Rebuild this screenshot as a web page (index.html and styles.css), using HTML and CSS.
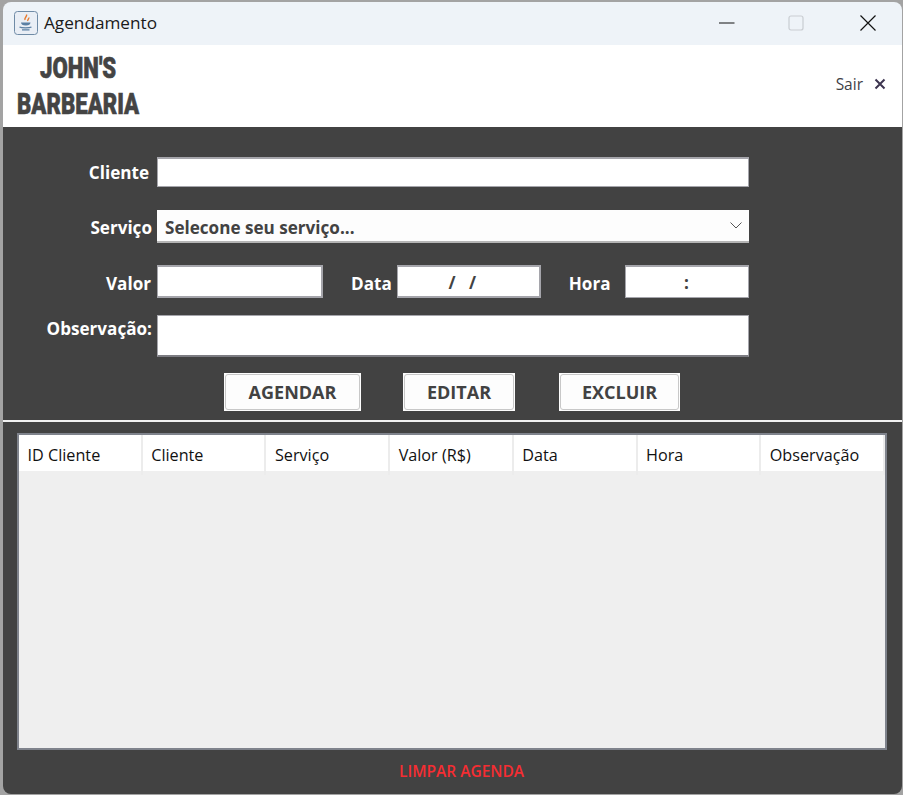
FILE: index.html
```html
<!DOCTYPE html>
<html lang="pt">
<head>
<meta charset="utf-8">
<title>Agendamento</title>
<link rel="stylesheet" href="styles.css">
</head>
<body>
<div class="window">
  <div class="titlebar">
    <span class="app-icon">
      <svg width="24" height="24" viewBox="0 0 24 24">
        <rect x="0.5" y="0.5" width="23" height="23" rx="3" fill="#e9eef5" stroke="#6f8ba6"/>
        <path d="M12.500 3.500c1 2-2.500 3-1.500 5.500M14.800 6.500c.5 1.300-1.500 2-1 3.500" fill="none" stroke="#e8792b" stroke-width="1.400"/>
        <path d="M7 11.500h9.500c-.2 2-1.500 3-4.700 3S7.200 13.500 7 11.500z" fill="#5a7fa3"/>
        <path d="M5.500 16c2 1.200 10 1.200 12 0M8 18.800h7.500" fill="none" stroke="#5a7fa3" stroke-width="1.200"/>
      </svg>
    </span>
    <span class="title">Agendamento</span>
    <div class="win-controls">
      <svg class="ctl-min" width="16" height="16" viewBox="0 0 16 16"><path d="M0 8h15.500" stroke="#111" stroke-width="1"/></svg>
      <svg class="ctl-max" width="16" height="16" viewBox="0 0 16 16"><rect x="1" y="1" width="14" height="14" rx="2" fill="none" stroke="#c9cdd2" stroke-width="1.200"/></svg>
      <svg class="ctl-close" width="16" height="16" viewBox="0 0 16 16"><path d="M0.500 0.500l15 15M15.500 0.500l-15 15" stroke="#111" stroke-width="1.200"/></svg>
    </div>
  </div>

  <header class="brandbar">
    <div class="logo"><span>JOHN'S</span><span>BARBEARIA</span></div>
    <div class="logout">
      <span>Sair</span>
      <svg width="12" height="12" viewBox="0 0 12 12"><path d="M1.500 1.500l9 9M10.500 1.500l-9 9" stroke="#3d3550" stroke-width="2"/></svg>
    </div>
  </header>

  <main class="panel">
    <div class="form">
      <div class="row row-cliente">
        <label class="lbl lbl-cliente">Cliente</label>
        <div class="field field-full"></div>
      </div>
      <div class="row row-servico">
        <label class="lbl lbl-servico">Serviço</label>
        <div class="select">
          <span>Selecone seu serviço...</span>
          <svg width="12" height="7" viewBox="0 0 12 7"><path d="M0.500 0.500l5.500 5.500 5.500-5.500" fill="none" stroke="#555" stroke-width="1"/></svg>
        </div>
      </div>
      <div class="row row-valor">
        <label class="lbl lbl-valor">Valor</label>
        <div class="field field-valor"></div>
        <label class="lbl-inline lbl-data">Data</label>
        <div class="field field-data">/&nbsp;&nbsp;&nbsp;/</div>
        <label class="lbl-inline lbl-hora">Hora</label>
        <div class="field field-hora">:</div>
      </div>
      <div class="row row-obs">
        <label class="lbl lbl-obs">Observação:</label>
        <div class="field field-obs"></div>
      </div>
      <div class="actions">
        <button class="btn btn-agendar">AGENDAR</button>
        <button class="btn btn-editar">EDITAR</button>
        <button class="btn btn-excluir">EXCLUIR</button>
      </div>
    </div>

    <hr class="divider">

    <section class="table">
      <div class="thead">
        <div class="th">ID Cliente</div>
        <div class="th">Cliente</div>
        <div class="th">Serviço</div>
        <div class="th">Valor (R$)</div>
        <div class="th">Data</div>
        <div class="th">Hora</div>
        <div class="th">Observação</div>
      </div>
    </section>

    <div class="clear">LIMPAR AGENDA</div>
  </main>
</div>
</body>
</html>
```

FILE: styles.css
```css
* { box-sizing: border-box; }

html, body {
  margin: 0;
  padding: 0;
  background: #a3a3a3;
}

body {
  width: 903px;
  height: 795px;
  overflow: hidden;
  font-family: "Open Sans", "Noto Sans", sans-serif;
}

.window {
  width: 903px;
  height: 795px;
  padding: 2px 1px 1px 3px;
  background: #a3a3a3;
  display: flex;
  flex-direction: column;
  border-radius: 10px;
}

.titlebar {
  height: 43px;
  flex: none;
  background: #eef3f8;
  border-radius: 8px 8px 0 0;
  display: flex;
  align-items: center;
  padding: 0 0 2px 11px;
}

.app-icon { display: flex; width: 24px; height: 24px; }

.title {
  margin-left: 6px;
  font-size: 17.200px;
  color: #1a1a1a;
}

.win-controls {
  margin-left: auto;
  display: flex;
  align-items: center;
  padding-right: 26px;
}

.ctl-min { margin-right: 53px; }
.ctl-max { margin-right: 56px; }

.brandbar {
  height: 82px;
  flex: none;
  background: #fff;
  display: flex;
  align-items: center;
  justify-content: space-between;
  padding: 0 16px 0 14px;
}

.logo {
  display: flex;
  flex-direction: column;
  align-items: center;
  margin-top: -1px;
  font-family: "Roboto", sans-serif;
  font-weight: 900;
  font-size: 29px;
  line-height: 36px;
  color: #444;
  -webkit-text-stroke: 0.6px #444;
  transform: scaleX(0.765);
  transform-origin: left center;
}

.logout {
  display: flex;
  align-items: center;
  gap: 11px;
  margin-bottom: 5px;
  font-size: 15.500px;
  color: #3f3f46;
}

.panel {
  flex: 1;
  min-height: 0;
  background: #424242;
  border-radius: 0 0 8px 8px;
  display: flex;
  flex-direction: column;
}

.form { padding-top: 30px; }

.row { display: flex; align-items: center; }
.row-servico { margin-top: 23px; }
.row-valor { margin-top: 22px; }
.row-obs { margin-top: 17px; align-items: flex-start; }

.lbl {
  width: 149px;
  margin-right: 5px;
  text-align: right;
  font-size: 17.100px;
  font-weight: 700;
  color: #fff;
  white-space: nowrap;
}

.lbl-cliente { width: 146px; margin-right: 8px; }
.lbl-servico { padding-top: 2px; }
.lbl-valor { width: 148px; margin-right: 6px; padding-top: 3px; }
.lbl-obs { line-height: 28px; width: 149px; }

.field {
  height: 30px;
  background: #fff;
  border: 1px solid #a5a5ab;
  border-top-width: 2px;
}

.field-full { width: 592px; }

.select {
  width: 592px;
  height: 33px;
  background: #fdfdfd;
  border-bottom: 2px solid #b5b5b5;
  display: flex;
  align-items: center;
  justify-content: space-between;
  padding: 4px 7px 0 8px;
  font-size: 17.100px;
  font-weight: 700;
  color: #424242;
}

.select svg { margin-top: -4px; }

.field-valor { width: 166px; height: 33px; border-right-width: 2px; border-bottom-width: 2px; }
.field-data, .field-hora {
  height: 33px;
  display: flex;
  align-items: center;
  justify-content: center;
  font-size: 17.100px;
  font-weight: 700;
  color: #424242;
}
.field-data { width: 144px; border-right-width: 2px; border-bottom-width: 2px; padding: 1px 12px 0 0; }
.field-hora { width: 124px; padding: 1px 2px 0 0; }

.lbl-inline {
  padding-top: 3px;
  font-size: 17.100px;
  font-weight: 700;
  color: #fff;
}
.lbl-data { margin-left: 28px; margin-right: 5px; }
.lbl-hora { margin-left: 28px; margin-right: 15px; }

.field-obs { width: 592px; height: 42px; border-top-width: 1px; border-bottom: 2px solid #7c7c82; }

.actions {
  display: flex;
  margin-top: 16px;
  padding-left: 221px;
}

.btn {
  position: relative;
  height: 38px;
  padding: 0;
  background: #fdfdfd;
  border: 0;
  font-family: inherit;
  font-size: 18px;
  font-weight: 700;
  color: #424242;
}

.btn::before {
  content: "";
  position: absolute;
  inset: 1px;
  border: 1px solid #c8c8c8;
  border-radius: 3px;
}

.btn-agendar { width: 137px; }
.btn-editar { width: 112px; margin-left: 42px; }
.btn-excluir { width: 121px; margin-left: 44px; }

.divider {
  margin: 9px 0 0;
  height: 2px;
  border: 0;
  background: #f1f1f1;
}

.table {
  margin: 11px 15px 0 14px;
  height: 317px;
  background: #efefef;
  border: 2px solid #7f838c;
  flex: none;
}

.thead {
  display: grid;
  grid-template-columns: repeat(7, 1fr);
  height: 36px;
  background: #fff;
}

.th {
  padding-left: 8.500px;
  font-size: 16.200px;
  line-height: 40px;
  color: #111;
  border-right: 2px solid #ececec;
  white-space: nowrap;
}

.clear {
  margin-top: 10px;
  padding-left: 396px;
  font-size: 15.500px;
  font-weight: 600;
  color: #f52d32;
}
```
